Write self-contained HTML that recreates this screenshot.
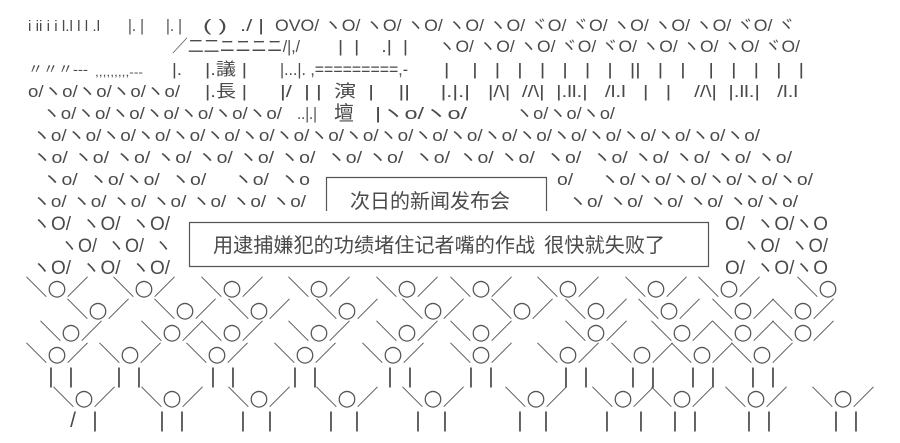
<!DOCTYPE html>
<html><head><meta charset="utf-8"><style>
html,body{margin:0;padding:0;background:#fff;}
svg{display:block}
text{font-family:"Liberation Sans","Noto Sans CJK JP",sans-serif;fill:#4a4a4a;white-space:pre}
.c{font-family:"Noto Sans CJK SC","Liberation Sans",sans-serif;}
.f text{font-family:"DejaVu Sans","Noto Sans CJK JP",sans-serif;font-size:22px;fill:#555}
.l{font-family:"Liberation Sans",sans-serif;font-size:21px}
</style></head><body>
<svg width="900" height="443" viewBox="0 0 900 443" xmlns="http://www.w3.org/2000/svg" font-size="17" xml:space="preserve">
<g lengthAdjust="spacingAndGlyphs">
<text x="28" y="31" textLength="72" lengthAdjust="spacingAndGlyphs" font-size="15">i ii i i l.l l l .l</text>
<text x="128" y="31" textLength="16" lengthAdjust="spacingAndGlyphs">|. |</text>
<text x="166" y="31" textLength="16" lengthAdjust="spacingAndGlyphs">|. |</text>
<text x="203" y="31" textLength="24" lengthAdjust="spacingAndGlyphs">( )</text>
<text x="240" y="31" textLength="24" lengthAdjust="spacingAndGlyphs">./ |</text>
<text x="275" y="31" textLength="520" lengthAdjust="spacingAndGlyphs">OVO/ ヽO/ ヽO/ ヽO/ ヽO/ ヽO/ ヾO/ ヾO/ ヽO/ ヽO/ ヽO/ ヾO/ ヾ</text>
<text x="172" y="52" textLength="128" lengthAdjust="spacingAndGlyphs">／二二ニニニニ/|,/</text>
<text x="338" y="52" textLength="70" lengthAdjust="spacingAndGlyphs">|  |    .|  |</text>
<text x="438" y="52" textLength="362" lengthAdjust="spacingAndGlyphs">ヽO/ ヽO/ ヽO/ ヾO/ ヾO/ ヽO/ ヽO/ ヽO/ ヾO/</text>
<text x="28" y="74" textLength="60" lengthAdjust="spacingAndGlyphs" font-size="14">〃〃〃---</text>
<text x="95" y="76" textLength="48" lengthAdjust="spacingAndGlyphs" font-size="12">,,,,,,,,,---</text>
<text x="172" y="75" textLength="10" lengthAdjust="spacingAndGlyphs">|.</text>
<text x="205" y="75" textLength="42" lengthAdjust="spacingAndGlyphs">|.議 |</text>
<text x="280" y="75" textLength="128" lengthAdjust="spacingAndGlyphs">|...|. ,=========,-</text>
<text x="444" y="75" textLength="360" lengthAdjust="spacingAndGlyphs">|    |   |   |   |   |   |   |   ||   |   |    |   |   |   |   |</text>
<text x="28" y="97" textLength="152" lengthAdjust="spacingAndGlyphs">o/ヽo/ヽo/ヽo/ヽo/</text>
<text x="205" y="97" textLength="42" lengthAdjust="spacingAndGlyphs">|.長 |</text>
<text x="280" y="97" textLength="190" lengthAdjust="spacingAndGlyphs">|/  | |  演  |    ||     |.|.|</text>
<text x="488" y="97" textLength="310" lengthAdjust="spacingAndGlyphs">|/\|  //\|  |.ll.|   /l.l   |   |    //\|  |.ll.|   /l.l</text>
<text x="42" y="119" textLength="240" lengthAdjust="spacingAndGlyphs">ヽo/ヽo/ヽo/ヽo/ヽo/ヽo/ヽo/</text>
<text x="297" y="119" textLength="20" lengthAdjust="spacingAndGlyphs">..|.|</text>
<text x="334" y="120" class="c" font-size="20">壇</text>
<text x="375" y="119" textLength="92" lengthAdjust="spacingAndGlyphs">|ヽo/ヽo/</text>
<text x="515" y="119" textLength="100" lengthAdjust="spacingAndGlyphs">ヽo/ヽo/ヽo/</text>
<text x="32" y="141" textLength="728" lengthAdjust="spacingAndGlyphs">ヽo/ヽo/ヽo/ヽo/ヽo/ヽo/ヽo/ヽo/ヽo/ヽo/ヽo/ヽo/ヽo/ヽo/ヽo/ヽo/ヽo/ヽo/ヽo/ヽo/ヽo/</text>
<text x="32" y="163" textLength="418" lengthAdjust="spacingAndGlyphs">ヽo/ ヽo/ ヽo/ ヽo/ ヽo/ ヽo/ ヽo/  ヽo/ ヽo/  ヽo/</text>
<text x="458" y="163" textLength="334" lengthAdjust="spacingAndGlyphs">ヽo/ ヽo/  ヽo/  ヽo/ ヽo/ ヽo/ ヽo/ ヽo/</text>
<text x="42" y="185" textLength="268" lengthAdjust="spacingAndGlyphs">ヽo/  ヽo/ヽo/  ヽo/     ヽo/  ヽo</text>
<text x="557" y="185" textLength="256" lengthAdjust="spacingAndGlyphs">o/     ヽo/ヽo/ヽo/ヽo/ヽo/ヽo/</text>
<text x="32" y="207" textLength="274" lengthAdjust="spacingAndGlyphs">ヽo/ ヽo/ ヽo/ ヽo/ ヽo/ ヽo/ ヽo/</text>
<text x="350" y="208" class="c" font-size="20" textLength="160" lengthAdjust="spacingAndGlyphs">次日的新闻发布会</text>
<text x="568" y="207" textLength="230" lengthAdjust="spacingAndGlyphs">ヽo/ ヽo/ ヽo/ ヽo/ ヽo/ヽo/</text>
<text x="32" y="230" textLength="138" lengthAdjust="spacingAndGlyphs" font-size="19">ヽO/  ヽO/  ヽO/</text>
<text x="725" y="230" textLength="103" lengthAdjust="spacingAndGlyphs" font-size="19">O/  ヽO/ヽO</text>
<text x="60" y="252" textLength="112" lengthAdjust="spacingAndGlyphs" font-size="19">ヽO/  ヽO/  ヽ</text>
<text x="213" y="252" class="c" font-size="20" textLength="452" lengthAdjust="spacingAndGlyphs">用逮捕嫌犯的功绩堵住记者嘴的作战  很快就失败了</text>
<text x="742" y="252" textLength="86" lengthAdjust="spacingAndGlyphs" font-size="19">ヽO/  ヽO/</text>
<text x="32" y="274" textLength="138" lengthAdjust="spacingAndGlyphs" font-size="19">ヽO/  ヽO/  ヽO/</text>
<text x="725" y="274" textLength="103" lengthAdjust="spacingAndGlyphs" font-size="19">O/  ヽO/ヽO</text>
</g>
<g stroke="#555" stroke-width="1.2" fill="none">
<path d="M326.5 211V177.5H546.5V211"/>
<path d="M189.5 222.5H708.5V266.5H189.5Z"/>
</g>
<g class="f" text-anchor="middle">
<text x="57" y="295">＼○／</text><text x="144" y="295">＼○／</text><text x="232" y="295">＼○／</text><text x="319" y="295">＼○／</text><text x="407" y="295">＼○／</text><text x="481" y="295">＼○／</text><text x="568" y="295">＼○／</text><text x="656" y="295">＼○／</text><text x="729" y="295">＼○／</text><text x="817" y="295">＼○</text>
<text x="98" y="317">＼○／</text><text x="185" y="317">＼○／</text><text x="259" y="317">＼○／</text><text x="347" y="317">＼○／</text><text x="433" y="317">＼○／</text><text x="522" y="317">＼○／</text><text x="596" y="317">＼○／</text><text x="669" y="317">＼○／</text><text x="743" y="317">＼○／</text><text x="803" y="317">＼○／</text>
<text x="71" y="339">＼○／</text><text x="172" y="339">＼○／</text><text x="232" y="339">＼○／</text><text x="319" y="339">＼○／</text><text x="407" y="339">＼○／</text><text x="481" y="339">＼○／</text><text x="596" y="339">＼○／</text><text x="682" y="339">＼○／</text><text x="743" y="339">＼○／</text><text x="803" y="339">＼○／</text>
<text x="57" y="361">＼○／</text><text x="130" y="361">＼○／</text><text x="217" y="361">＼○／</text><text x="305" y="361">＼○／</text><text x="393" y="361">＼○／</text><text x="481" y="361">＼○／</text><text x="568" y="361">＼○／</text><text x="642" y="361">＼○／</text><text x="702" y="361">＼○／</text><text x="762" y="361">＼○／</text>
<text x="84" y="405">＼○／</text><text x="172" y="405">＼○／</text><text x="259" y="405">＼○／</text><text x="347" y="405">＼○／</text><text x="433" y="405">＼○／</text><text x="536" y="405">＼○／</text><text x="623" y="405">＼○／</text><text x="682" y="405">＼○／</text><text x="756" y="405">＼○／</text><text x="843" y="405">＼○／</text>
</g>
<g class="l" text-anchor="middle">
<text x="51" y="383">|</text><text x="71" y="383">|</text><text x="119" y="383">|</text><text x="139" y="383">|</text><text x="213" y="383">|</text><text x="233" y="383">|</text><text x="295" y="383">|</text><text x="315" y="383">|</text><text x="390" y="383">|</text><text x="410" y="383">|</text><text x="471" y="383">|</text><text x="491" y="383">|</text><text x="566" y="383">|</text><text x="586" y="383">|</text><text x="633" y="383">|</text><text x="653" y="383">|</text><text x="693" y="383">|</text><text x="713" y="383">|</text><text x="753" y="383">|</text><text x="773" y="383">|</text>
<text x="73" y="427">/</text><text x="95" y="427">|</text><text x="162" y="427">|</text><text x="182" y="427">|</text><text x="243" y="427">|</text><text x="270" y="427">|</text><text x="331" y="427">|</text><text x="357" y="427">|</text><text x="418" y="427">|</text><text x="445" y="427">|</text><text x="520" y="427">|</text><text x="546" y="427">|</text><text x="607" y="427">|</text><text x="641" y="427">|</text><text x="675" y="427">|</text><text x="695" y="427">|</text><text x="749" y="427">|</text><text x="769" y="427">|</text><text x="836" y="427">|</text><text x="856" y="427">|</text>
</g>
</svg>
</body></html>
